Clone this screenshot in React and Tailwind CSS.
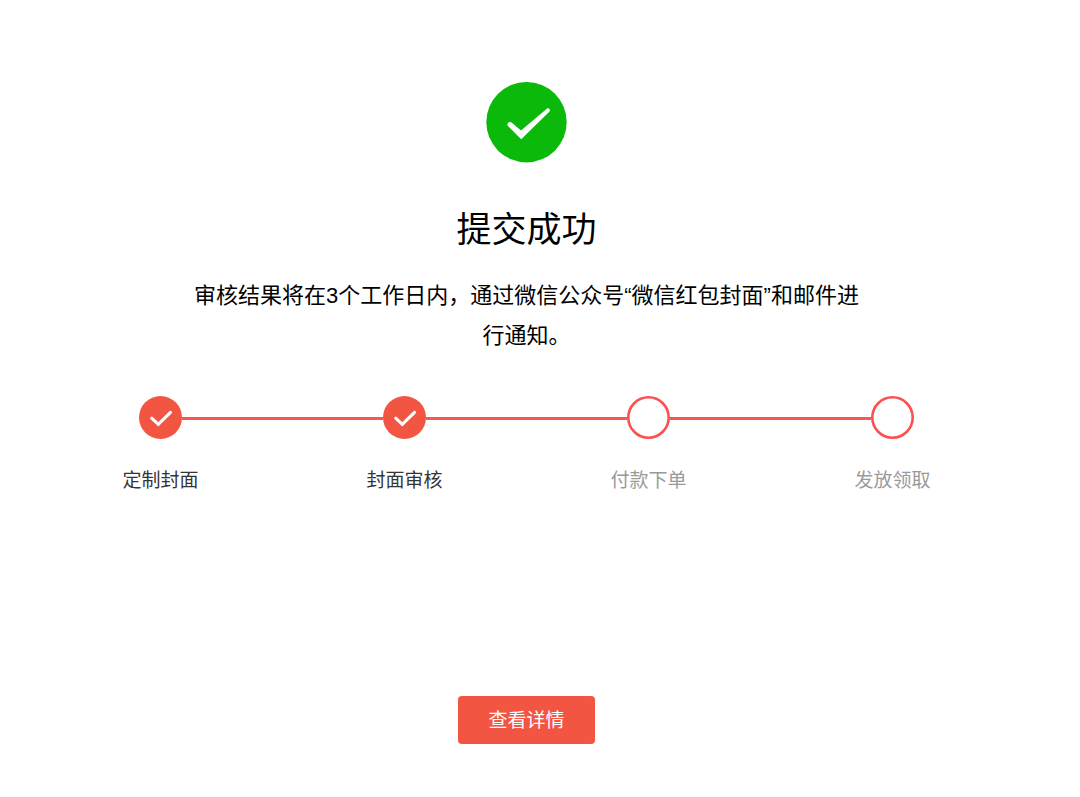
const steps = [
  { label: "定制封面", done: true },
  { label: "封面审核", done: true },
  { label: "付款下单", done: false },
  { label: "发放领取", done: false },
];

function StepMark({ done }) {
  return (
    <svg viewBox="0 0 43 43" className="size-[43px] shrink-0" aria-hidden="true">
      {done ? (
        <>
          <circle cx="21.5" cy="21.5" r="21.5" fill="#f35543" />
          <path
            d="M12.7 22.2l6.6 6.2 12.2-12"
            fill="none"
            stroke="#fff"
            strokeWidth="3.1"
            strokeLinecap="round"
            strokeLinejoin="miter"
          />
        </>
      ) : (
        <circle cx="21.5" cy="21.5" r="20.2" fill="#fff" stroke="#fa5151" strokeWidth="2.6" />
      )}
    </svg>
  );
}

function Connector({ visible }) {
  return <span className={visible ? "mt-[21px] h-[3px] flex-1 bg-[#fa5555]" : "flex-1"} />;
}

export default function App() {
  return (
    <main
      lang="zh-CN"
      className="flex min-h-screen flex-col items-center bg-white pt-[82px] pr-[27px] pb-[53px] font-['Liberation_Sans','Noto_Sans_CJK_SC',sans-serif] text-black"
    >
      <svg viewBox="0 0 81 81" className="size-[81px]" role="img" aria-label="成功">
        <circle cx="40.5" cy="40.2" r="40.2" fill="#0bb90b" />
        <path
          d="M21.9 40.9c1-1.2 2.5-1.3 3.7-.4l9.4 7.9L60.8 26.8c1-.7 2-.5 2.7.3.6.8.6 1.8-.2 2.6L35.2 57.2 22 43.9c-.8-.8-.9-2-.1-3z"
          fill="#fff"
        />
      </svg>

      <h1 className="mt-[41px] text-[35px] leading-[52px]">提交成功</h1>

      <p className="mt-5 max-w-[676px] text-center text-[22px] leading-10">
        审核结果将在3个工作日内，通过微信公众号“微信红包封面”和邮件进行通知。
      </p>

      <ol className="mt-10 grid w-full max-w-[976px] grid-cols-4">
        {steps.map((step, i) => (
          <li key={step.label} className="flex flex-col items-center">
            <div className="flex w-full items-start">
              <Connector visible={i > 0} />
              <StepMark done={step.done} />
              <Connector visible={i < steps.length - 1} />
            </div>
            <span
              className={
                step.done
                  ? "mt-7 text-[19px] leading-7 text-[#353535]"
                  : "mt-7 text-[19px] leading-7 text-[#9a9a9a]"
              }
            >
              {step.label}
            </span>
          </li>
        ))}
      </ol>

      <button
        type="button"
        className="mt-[201px] h-12 w-[137px] cursor-pointer rounded bg-[#f35543] pt-0.5 text-[19px] leading-7 text-white"
      >
        查看详情
      </button>
    </main>
  );
}
